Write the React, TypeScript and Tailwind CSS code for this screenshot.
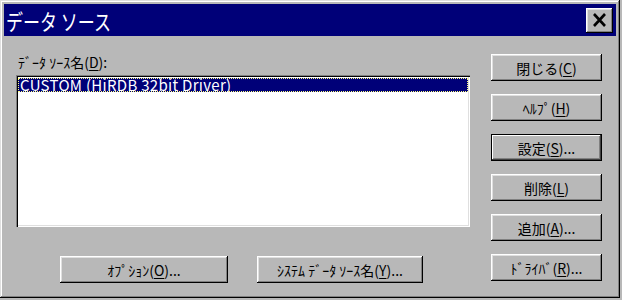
import React from "react";

const font = { fontFamily: '"Noto Sans CJK JP", "Noto Sans", sans-serif' };

function Mn({ c }: { c: string }) {
  return <span className="underline underline-offset-[2px] decoration-1">{c}</span>;
}

function Btn({
  children,
  className = "",
  def = false,
}: {
  children: React.ReactNode;
  className?: string;
  def?: boolean;
}) {
  return (
    <div
      className={
        "h-[27px] flex items-center justify-center text-[14px] text-black leading-none " +
        (def
          ? "border border-black shadow-[inset_-1px_-1px_#404040,inset_1px_1px_#fff,inset_-2px_-2px_#808080] "
          : "shadow-[inset_-1px_-1px_#000,inset_1px_1px_#fff,inset_-2px_-2px_#808080,inset_2px_2px_#dfdfdf] ") +
        className
      }
    >
      <span className="whitespace-pre">{children}</span>
    </div>
  );
}

export default function App() {
  return (
    <div className="w-[622px] h-[300px] bg-[#b8b8b8] overflow-hidden" style={font}>
      <div className="w-[620px] h-[298px] p-[4px] shadow-[inset_-1px_-1px_#000,inset_1px_1px_#dfdfdf,inset_-2px_-2px_#808080,inset_2px_2px_#fff] flex flex-col">
        {/* title bar */}
        <div className="h-[32px] bg-[#000078] flex items-center justify-between pl-[2px] pr-[3px]">
          <span className="text-white text-[17px] leading-none scale-y-[1.3] origin-left">
            データ ソース
          </span>
          <div className="w-[27px] h-[25px] bg-[#b8b8b8] flex items-center justify-center shadow-[inset_-1px_-1px_#000,inset_1px_1px_#fff,inset_-2px_-2px_#808080,inset_2px_2px_#dfdfdf]">
            <svg width="15" height="14" viewBox="0 0 15 14">
              <path d="M2 1 L13 13 M13 1 L2 13" stroke="#000" strokeWidth="2.6" />
            </svg>
          </div>
        </div>
        {/* body */}
        <div className="flex flex-row">
          <div className="ml-[12px] w-[454px] flex flex-col">
            <div className="mt-[16px] h-[21px] text-[14px] leading-[21px] text-black pl-[2px]">
              ﾃﾞｰﾀ ｿｰｽ名(<Mn c="D" />):
            </div>
            <div className="mt-[2px] h-[152px] bg-white p-[2px] shadow-[inset_1px_1px_#808080,inset_2px_2px_#000,inset_-1px_-1px_#fff,inset_-2px_-2px_#dfdfdf]">
              <div className="mt-[1px] h-[14px] bg-[#000078] border border-dotted border-[#ffff80] text-white text-[15px] leading-[12px] tracking-[0.3px] pl-[1px] whitespace-pre">
                CUSTOM (HiRDB 32bit Driver)
              </div>
            </div>
            <div className="mt-[29px] flex flex-row">
              <Btn className="ml-[44px] w-[168px]">
                ｵﾌﾟｼｮﾝ(<Mn c="O" />)...
              </Btn>
              <Btn className="ml-[29px] w-[166px]">
                ｼｽﾃﾑ ﾃﾞｰﾀ ｿｰｽ名(<Mn c="Y" />)...
              </Btn>
            </div>
          </div>
          <div className="ml-[21px] w-[111px] mt-[18px] flex flex-col gap-[13px]">
            <Btn>
              閉じる(<Mn c="C" />)
            </Btn>
            <Btn>
              ﾍﾙﾌﾟ(<Mn c="H" />)
            </Btn>
            <Btn def>
              設定(<Mn c="S" />)...
            </Btn>
            <Btn>
              削除(<Mn c="L" />)
            </Btn>
            <Btn>
              追加(<Mn c="A" />)...
            </Btn>
            <Btn>
              ﾄﾞﾗｲﾊﾞ(<Mn c="R" />)...
            </Btn>
          </div>
        </div>
      </div>
    </div>
  );
}
